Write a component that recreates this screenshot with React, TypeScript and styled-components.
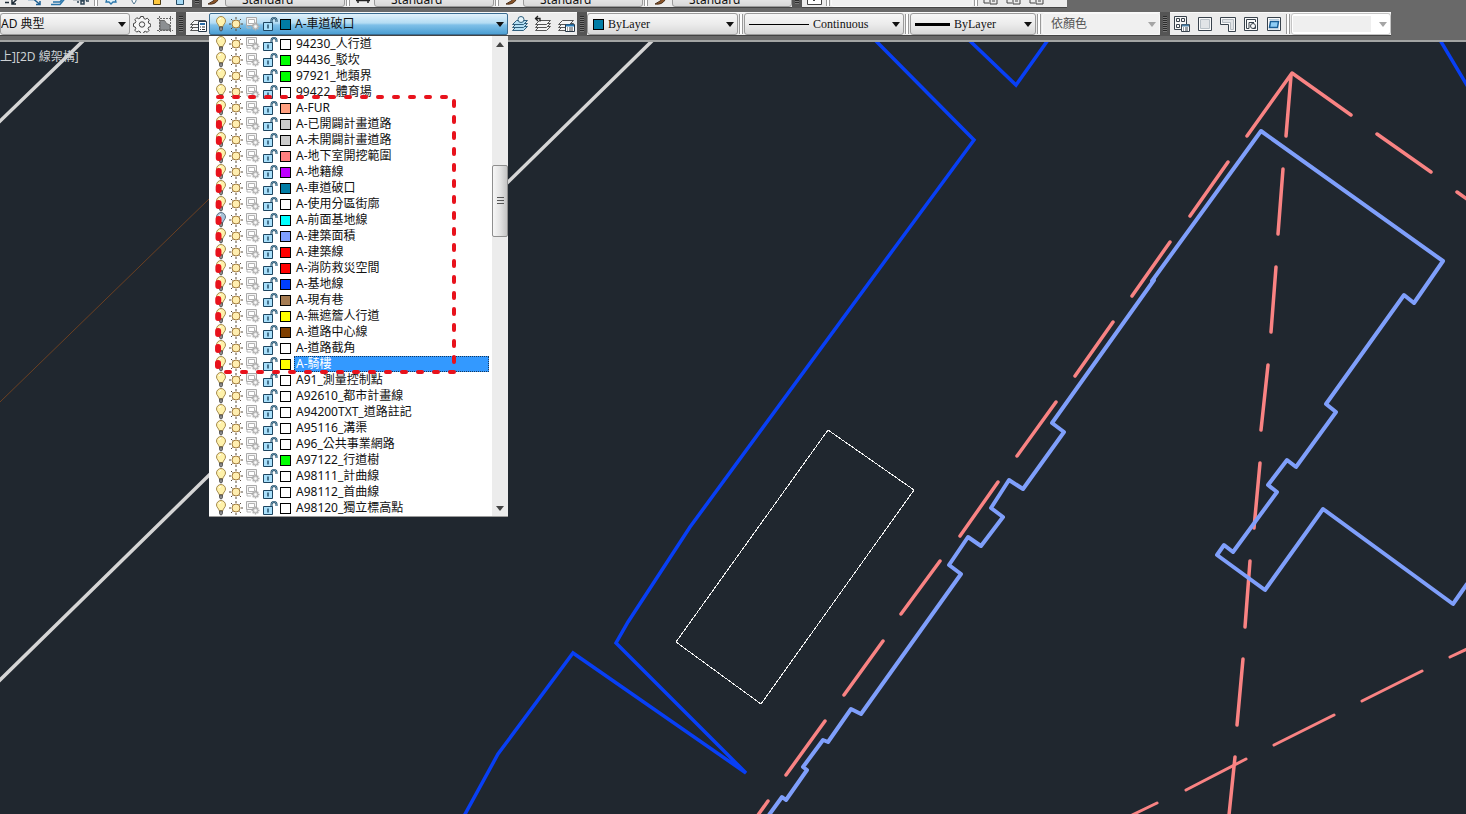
import React from "react";
import styled, { createGlobalStyle } from "styled-components";

const GlobalStyle = createGlobalStyle`
  *, *::before, *::after { box-sizing: border-box; }
  html, body { margin: 0; padding: 0; }
  body {
    background: #20262f;
    color: #111;
    font: 12px/16px "Noto Sans", "Noto Sans CJK TC", sans-serif;
    overflow: hidden;
  }
  svg { display: block; flex: none; }
`;

const SERIF = '"Liberation Serif", "Noto Sans CJK TC", serif';

/* ---------- layout ---------- */

const Window = styled.div`
  display: flex;
  flex-direction: column;
  min-height: 100vh;
`;

const ToolbarArea = styled.header`
  position: relative;
  z-index: 2;
  display: flex;
  flex-direction: column;
  gap: 4px;
  padding-bottom: 4px;
  background: #696969;
  border-bottom: 2px solid #a3a5a4;
`;

const ToolbarRow = styled.div`
  display: flex;
  height: 24px;
`;

const Toolbar = styled.div<{ $width: number; $pad?: number }>`
  flex: none;
  display: flex;
  align-items: center;
  width: ${(p) => p.$width}px;
  height: 24px;
  padding: 0 ${(p) => p.$pad ?? 0}px;
  background: #ececec;
  border-top: 1px solid #fafafa;
  border-bottom: 1px solid #444;
`;

const Grip = styled.div`
  flex: none;
  width: 10px;
  height: 24px;
  border: 3px solid #555;
  border-width: 4px 3px;
  background: repeating-linear-gradient(#2c2c2c 0 1px, #777 1px 2px);
`;

const Divider = styled.span`
  flex: none;
  width: 6px;
  height: 20px;
  border: 1px solid #ececec;
  border-width: 0 1px;
  background: linear-gradient(90deg, #9a9a9a 1px, #fff 1px 3px, #9a9a9a 3px);
`;

const ToolButton = styled.button`
  flex: none;
  display: flex;
  align-items: center;
  justify-content: center;
  width: 23px;
  height: 22px;
  padding: 0;
  border: 0;
  background: transparent;
`;

/* ---------- combo boxes ---------- */

const ComboShell = styled.label<{ $width: number; $pad?: number; $disabled?: boolean }>`
  flex: none;
  display: flex;
  align-items: center;
  gap: 4px;
  width: ${(p) => p.$width}px;
  height: 22px;
  padding: 0 3px 0 ${(p) => p.$pad ?? 4}px;
  border: 1px solid ${(p) => (p.$disabled ? "#f8f8f8" : "#9b9b9b")};
  border-radius: 3px;
  background: ${(p) => (p.$disabled ? "#f0f0f0" : "linear-gradient(#f7f7f7, #ececec 50%, #d8d8d8)")};
`;

const BlankShell = styled(ComboShell)`
  gap: 8px;
  border-color: #c4c4c4;
  background: #fff;
`;

const NativeSelect = styled.select<{ $serif?: boolean }>`
  flex: 1;
  min-width: 0;
  height: 20px;
  padding: 0;
  border: 0;
  appearance: none;
  background: transparent;
  color: #111;
  font: 12px/16px ${(p) => (p.$serif ? SERIF : '"Noto Sans", "Noto Sans CJK TC", sans-serif')};
  &:disabled { color: #555; opacity: 1; }
`;

const BlankSelect = styled(NativeSelect)`
  background: #efefef;
  height: 16px;
`;

/* The upper toolbar is scrolled under the window edge: only its foot shows. */
const ClippedRow = styled.div`
  display: flex;
  align-items: flex-end;
  height: 8px;
  overflow: hidden;

  ${ToolButton} { padding-top: 6px; }
  ${NativeSelect} { padding-top: 6px; }
`;

const Swatch = styled.span<{ $color: string }>`
  flex: none;
  width: 11px;
  height: 11px;
  border: 1px solid #000;
  background: ${(p) => p.$color};
`;

const LineSample = styled.span<{ $width: number; $weight: number }>`
  flex: none;
  width: ${(p) => p.$width}px;
  height: ${(p) => p.$weight}px;
  background: #000;
`;

const Caret = ({ color = "#111", up = false }: { color?: string; up?: boolean }) => (
  <svg width="8" height="5" viewBox="0 0 8 5" aria-hidden="true" pointerEvents="none">
    <path d={up ? "M0 5 4 0 8 5z" : "M0 0h8L4 5z"} fill={color} />
  </svg>
);

const LayerPicker = styled.div`
  position: relative;
  flex: none;
  width: 299px;
  height: 22px;
`;

const LayerButton = styled.button`
  display: flex;
  align-items: center;
  width: 100%;
  height: 22px;
  padding: 0 3px 0 4px;
  border: 1px solid #3b6d92;
  border-radius: 2px;
  background: linear-gradient(#e2f2fb, #b4dcf3 45%, #7fc0e8 55%, #4c9fd3);
  color: #111;
  font: inherit;
  text-align: left;
`;

const LayerMenu = styled.div`
  position: absolute;
  top: 100%;
  left: 0;
  display: flex;
  width: 100%;
  margin-top: 1px;
  background: #fff;
  border-bottom: 1px solid #9a9a9a;
`;

const LayerList = styled.ul`
  flex: 1;
  margin: 0;
  padding: 0 3px 0 5px;
  list-style: none;
`;

const LayerRow = styled.li`
  display: flex;
  align-items: center;
  height: 16px;
`;

const StateIcons = styled.span`
  flex: none;
  display: flex;
  align-items: center;
  width: 66px;
`;

const LayerName = styled.span<{ $selected?: boolean }>`
  flex: 1;
  height: 16px;
  margin-left: 3px;
  padding-left: 1px;
  white-space: nowrap;
  line-height: ${(p) => (p.$selected ? 14 : 16)}px;
  border: 1px ${(p) => (p.$selected ? "dotted #15385c" : "solid transparent")};
  border-width: ${(p) => (p.$selected ? 1 : 0)}px 1px;
  background: ${(p) => (p.$selected ? "#3399ff" : "transparent")};
  color: ${(p) => (p.$selected ? "#fff" : "#111")};
`;

const Current = styled.span`
  flex: 1;
  margin-left: 4px;
`;

const Scrollbar = styled.div`
  flex: none;
  display: flex;
  flex-direction: column;
  width: 16px;
  background: #ececec;
`;

const ScrollArrow = styled.button`
  display: flex;
  align-items: center;
  justify-content: center;
  height: 16px;
  padding: 0;
  border: 0;
  background: transparent;
`;

const Track = styled.span<{ $grow: number }>`
  flex: ${(p) => p.$grow};
`;

const Thumb = styled.span`
  display: flex;
  flex-direction: column;
  align-items: center;
  justify-content: center;
  gap: 1px;
  height: 72px;
  border: 1px solid #8f8f8f;
  border-radius: 2px;
  background: linear-gradient(90deg, #f7f7f7, #e4e4e4 50%, #c4c4c4);
`;

const ThumbLine = styled.span`
  width: 7px;
  height: 2px;
  border-top: 1px solid #555;
`;

const Markup = styled.svg`
  position: absolute;
  top: 0;
  left: 0;
  pointer-events: none;
`;

/* ---------- drawing area ---------- */

const Canvas = styled.main`
  position: relative;
  flex: 1;
  display: flex;
  min-height: 0;
  background: #20272f;
`;

const Drawing = styled.svg`
  flex: 1;
  width: 100%;
  height: calc(100vh - 42px);
`;

const ViewLabel = styled.div`
  position: absolute;
  top: 7px;
  left: 0;
  color: #ccd0d3;
  white-space: nowrap;
`;

/* ---------- icons ---------- */

const Bulb = ({ off = false }: { off?: boolean }) => (
  <svg width="14" height="16" viewBox="0 0 14 16" aria-hidden="true">
    <path d="M5 10.500C5 8.500 2.500 7.500 2.500 5a4.500 4.500 0 0 1 9 0c0 2.500-2.500 3.500-2.500 5.500z" fill={off ? "#a9c3d8" : "#fff2ab"} stroke={off ? "#5b7183" : "#a58a4e"} />
    <path d="M5.500 11v2.500l1 1.500h1l1-1.500V11z" fill="#888" stroke="#444" strokeWidth=".8" />
    <path d="M5 4q.5-1.500 2-1.500" fill="none" stroke="#fff" />
  </svg>
);

const Sun = () => (
  <svg width="16" height="16" viewBox="0 0 16 16" aria-hidden="true">
    <path d="M8 1v2M8 13v2M1 8h2M13 8h2M3 3l1.500 1.500M11.500 11.500 13 13M13 3l-1.500 1.500M4.500 11.500 3 13" stroke="#55483a" />
    <circle cx="8" cy="8" r="4" fill="#ffeeb0" stroke="#a07a3c" />
  </svg>
);

const ViewportFreeze = () => (
  <svg width="18" height="16" viewBox="0 0 18 16" aria-hidden="true">
    <path d="M2.500 1.500h10v8h-10z" fill="#f4f4f4" stroke="#aaa" />
    <path d="M4.500 3.500h6v4h-6z" fill="#fff" stroke="#b4b4b4" />
    <path d="M3 9.500v2.500h4" fill="none" stroke="#b8b8b8" />
    <path d="M11.500 6.500v8M7.500 10.500h8M8.700 7.700l5.600 5.600M14.300 7.700l-5.600 5.600" stroke="#b0b0b0" strokeWidth="1.500" />
    <circle cx="11.500" cy="10.500" r="2.500" fill="#dcdcdc" stroke="#b0b0b0" />
    <circle cx="11.500" cy="10.500" r="1" fill="#fff" />
  </svg>
);

const Unlock = () => (
  <svg width="16" height="16" viewBox="0 0 16 16" aria-hidden="true">
    <path d="M9.500 7V4.500c0-3.500 5-3.500 5 0V6" fill="none" stroke="#1d4560" strokeWidth="2" />
    <path d="M9.500 7V4.500c0-3.500 5-3.500 5 0V6" fill="none" stroke="#a5d8f0" strokeWidth=".6" />
    <path d="M1.500 6.500h9v8h-9z" fill="#a9e0fb" stroke="#1d4560" />
    <path d="M6 8.500v4" stroke="#1d4560" strokeWidth="1.400" />
  </svg>
);

const Gear = () => (
  <svg width="18" height="18" viewBox="0 0 18 18" fill="#f6f6f6" stroke="#444" aria-hidden="true">
    <path d="M7.600 1.500h2.800l.5 2 1.500.7 1.900-1 1.900 2-1 1.800.6 1.400 1.900.6v2.600l-2 .5-.6 1.500 1 1.800-1.900 1.900-1.800-1-1.400.6-.6 1.600H7.600l-.5-1.800-1.600-.6-1.800 1-1.900-1.900 1-1.800-.6-1.400-1.700-.5V8.500l1.800-.6.6-1.400-1-1.800 1.900-2 1.800 1 1.500-.6z" />
    <circle cx="9" cy="9.500" r="2.700" />
  </svg>
);

const Clip = () => (
  <svg width="18" height="18" viewBox="0 0 18 18" aria-hidden="true">
    <path d="M4 15V5.500h4.500q1.500 4 5.500 4.500v5z" fill="#8c8f92" stroke="#666" />
    <path d="M1 3.500h16M3.500 1v16M14.500 1v16M1 15.500h16" stroke="#666" strokeDasharray="2 1" />
  </svg>
);

const Sheets = ({ kind }: { kind: "manager" | "current" | "previous" | "states" }) => {
  const line = kind === "current" ? "#31607d" : "#555";
  return (
    <svg width="18" height="18" viewBox="0 0 18 18" aria-hidden="true">
      <g fill={kind === "current" ? "#b5dff4" : "#f4f4f4"} stroke={line}>
        <path d="M5.500 11.500h11l-4 4h-11z" />
        <path d="M5.500 8.500h11l-4 4h-11z" />
        <path d="M5.500 5.500h11l-4 4h-11z" />
      </g>
      {kind === "manager" && (
        <>
          <path d="M9.500 6.500h8v10h-8z" fill="#fff" stroke="#263646" />
          <path d="M11 9h5" stroke="#2b6ca5" strokeWidth="2" />
          <path d="M11 12h1m1 0h3m-5 2.500h1m1 0h3" stroke="#333" />
        </>
      )}
      {kind === "current" && <circle cx="10" cy="4.500" r="3" fill="#e4f4fb" stroke={line} />}
      {kind === "previous" && <path d="M1 3.500h5v3M4 1 1.500 3.500 4 6" fill="none" stroke="#222" strokeWidth="1.300" />}
      {kind === "states" && (
        <>
          <path d="M8.500 9.500h9v7h-9z" fill="#fff" stroke="#263646" />
          <path d="M9 10.500h8" stroke="#2b7db8" strokeWidth="2" />
          <path d="M10 13h1m1 0h4m-6 2h1m1 0h4" stroke="#444" />
        </>
      )}
    </svg>
  );
};

const Viewports = ({ kind }: { kind: "named" | "single" | "poly" | "object" | "clip" }) => (
  <svg width="16" height="16" viewBox="0 0 16 16" fill="none" stroke="#38424c" aria-hidden="true">
    {kind === "named" && (
      <>
        <path d="M.5.5h12v13H.5z" fill="#f7f7f7" />
        <path d="M2.500 2.500h3v3h-3zM7.500 2.500h3v3h-3zM2.500 8.500h3v3h-3z" />
        <path d="M7.500 8.500h8v7h-8z" fill="#fff" />
        <path d="M8 9.500h7" stroke="#4a7fa5" strokeWidth="2" />
        <path d="M9 12h1m1 0h3m-5 2h1m1 0h3" />
      </>
    )}
    {kind === "single" && (
      <>
        <path d="M1.500 1.500h13v13h-13z" fill="#fafafa" />
        <path d="M3.500 3.500h9v9h-9z" fill="#e1e4e7" stroke="#b8c0c7" />
      </>
    )}
    {kind === "poly" && (
      <>
        <path d="M.5 1.500h15v14h-7v-7h-8z" fill="#fafafa" />
        <path d="M2.500 3.500h11v10h-3v-7h-8z" fill="#e1e4e7" stroke="#b5bcc2" />
      </>
    )}
    {kind === "object" && (
      <>
        <path d="M1.500 1.500h13v13h-13z" fill="#fafafa" />
        <path d="M12.500 6V3.500h-9v9H6V6.500h5" />
        <circle cx="10" cy="10" r="2.500" />
        <path d="M10 12.500h2.500V10" />
      </>
    )}
    {kind === "clip" && (
      <>
        <path d="M1.500 1.500h13v13h-13z" fill="#fafafa" />
        <path d="M4.500 5.500h8l-1 6h-8z" fill="#8fcdf5" stroke="#1c5f96" strokeWidth="1.500" />
        <path d="M3 3.500h10M3 13h10" stroke="#b5cbdc" />
      </>
    )}
  </svg>
);

const TopIcon = ({ kind }: { kind: number }) => (
  <svg width="18" height="16" viewBox="0 0 18 16" fill="none" aria-hidden="true">
    {kind === 0 && <path d="M1 11.500h4M8 13l6-6M8 9v4h4" stroke="#1d2b36" strokeWidth="1.500" />}
    {kind === 1 && <path d="M1 8.500h6l6 5M13 10v3.500H9" stroke="#1d5f92" strokeWidth="1.500" />}
    {kind === 2 && <path d="M1 13.500h9l5-6M3 11h7l4-5" stroke="#2a76ab" strokeWidth="1.500" />}
    {kind === 3 && <path d="M0 8.500h14M8 10h3v3H8zM13 10h3M4 11h2" stroke="#2f4657" strokeWidth="1.500" />}
    {kind === 4 && <path d="M5 7 4 11h3l2 2 2-2h3l-1-4" stroke="#2a76ab" strokeWidth="1.300" fill="#dff1fa" />}
    {kind === 5 && <path d="M7 6v4l2 3 2-3V6" stroke="#4b728c" fill="#fff" />}
    {kind === 6 && <path d="M5.500 6.500h7v7h-7z" stroke="#4c3b12" fill="#ffc83d" />}
    {kind === 7 && <path d="M5.500 6.500h7v7h-7z" stroke="#264a62" fill="#a6daf5" />}
    {kind === 8 && <path d="M3 13q7 1 10-4l2-4-4 1q-1 4-8 7z" fill="#8a5326" stroke="#4d321d" />}
    {kind === 9 && <path d="M2 9.500h14M4 6v6M14 6v6" stroke="#222" strokeWidth="1.500" />}
    {kind === 10 && <path d="M2 7v5h5m1-5h7v6H8zm2 3h3" stroke="#444" />}
    {kind === 11 && <path d="M2.500 1.500h14v12h-14zM7 8l2 2 3-3" stroke="#444" fill="#fff" />}
  </svg>
);

/* ---------- data ---------- */

type Layer = { name: string; color?: string; off?: boolean; selected?: boolean };

const LAYERS: Layer[] = [
  { name: "94230_人行道" },
  { name: "94436_駁坎", color: "#00ff00" },
  { name: "97921_地類界", color: "#00ff00" },
  { name: "99422_體育場" },
  { name: "A-FUR", color: "#ff9f7f" },
  { name: "A-已開闢計畫道路", color: "#cccccc" },
  { name: "A-未開闢計畫道路", color: "#cccccc" },
  { name: "A-地下室開挖範圍", color: "#ff7f7f" },
  { name: "A-地籍線", color: "#bf00ff" },
  { name: "A-車道破口", color: "#007ca5" },
  { name: "A-使用分區街廓" },
  { name: "A-前面基地線", color: "#00ffff", off: true },
  { name: "A-建築面積", color: "#7f9fff" },
  { name: "A-建築線", color: "#ff0000" },
  { name: "A-消防救災空間", color: "#ff0000" },
  { name: "A-基地線", color: "#003fff" },
  { name: "A-現有巷", color: "#a57c52" },
  { name: "A-無遮簷人行道", color: "#ffff00" },
  { name: "A-道路中心線", color: "#7f3f00" },
  { name: "A-道路截角" },
  { name: "A-騎樓", color: "#ffff00", selected: true },
  { name: "A91_測量控制點" },
  { name: "A92610_都市計畫線" },
  { name: "A94200TXT_道路註記" },
  { name: "A95116_溝渠" },
  { name: "A96_公共事業網路" },
  { name: "A97122_行道樹", color: "#00ff00" },
  { name: "A98111_計曲線" },
  { name: "A98112_首曲線" },
  { name: "A98120_獨立標高點" },
];

const WIDE_DASHES =
  "M1292 73 1247 136M1228 162 1190 216M1170 242 1132 296M1113 322 1075 376M1056 402 1017 456M998 482 960 536M940 561 901 614M883 641 844 695M825 721 786 775M768 801 758 815" +
  "M1292 73 1351 115M1377 134 1431 172M1457 192 1467 199" +
  "M1291 76 1286 136M1283 169 1278 234M1276 267 1271 332M1268 365 1261 430M1260 463 1254 528M1250 561 1245 627M1243 659 1237 725M1235 757 1229 815";

const NARROW_DASHES =
  "M1132 815 1157 803M1186 790 1246 759M1274 745 1334 715M1362 701 1422 671M1450 657 1467 649";

const BUILDING =
  "M769 815 782 797 786 800 807 770 803 767 823 740 828 742 851 709 861 714 961 574 949 565 968 537 981 546 1003 517 991 508 1009 480 1023 489 1064 432 1052 423 1154 280 1152 281 1261 131 1443 261 1414 303 1404 295 1326 404 1336 412 1296 467 1287 460 1268 485 1277 492 1233 552 1224 545 1217 555 1265 590 1323 509 1453 604 1467 584";

/* ---------- parts ---------- */

const LayerState = ({ off }: { off?: boolean }) => (
  <StateIcons>
    <Bulb off={off} />
    <Sun />
    <ViewportFreeze />
    <Unlock />
  </StateIcons>
);

const StyleCombo = ({ label, width }: { label: string; width: number }) => (
  <ComboShell $width={width} $pad={16}>
    <NativeSelect aria-label={label}>
      <option>Standard</option>
    </NativeSelect>
    <Caret />
  </ComboShell>
);

const TopTool = ({ kind, label }: { kind: number; label: string }) => (
  <ToolButton aria-label={label}>
    <TopIcon kind={kind} />
  </ToolButton>
);

const INQUIRY_TOOLS = ["Distance", "Leader", "Layer walk", "Isolate"];
const LAYER_TOOLS = ["Freeze", "Off", "Lock", "Unlock"];

function StyleToolbars() {
  return (
    <ClippedRow>
      <Toolbar $width={192} $pad={1}>
        {INQUIRY_TOOLS.map((label, i) => (
          <TopTool key={label} kind={i} label={label} />
        ))}
        <Divider />
        {LAYER_TOOLS.map((label, i) => (
          <TopTool key={label} kind={i + 4} label={label} />
        ))}
      </Toolbar>
      <Grip />
      <Toolbar $width={590}>
        <TopTool kind={8} label="Text style" />
        <StyleCombo label="Text style" width={120} />
        <Divider />
        <TopTool kind={9} label="Dimension style" />
        <StyleCombo label="Dimension style" width={120} />
        <Divider />
        <TopTool kind={8} label="Table style" />
        <StyleCombo label="Table style" width={120} />
        <Divider />
        <TopTool kind={8} label="Multileader style" />
        <StyleCombo label="Multileader style" width={120} />
      </Toolbar>
      <Grip />
      <Toolbar $width={265}>
        <TopTool kind={11} label="Reference" />
        <Divider />
        <ComboShell $width={142} $disabled>
          <NativeSelect aria-label="Reference name" disabled />
        </ComboShell>
        <Divider />
        <TopTool kind={10} label="Edit reference" />
        <TopTool kind={10} label="Add to set" />
        <TopTool kind={10} label="Remove from set" />
      </Toolbar>
    </ClippedRow>
  );
}

function LayerDropDown() {
  return (
    <LayerPicker>
      <LayerButton aria-haspopup="listbox" aria-expanded="true">
        <LayerState />
        <Swatch $color="#007ca5" />
        <Current>A-車道破口</Current>
        <Caret />
      </LayerButton>
      <LayerMenu>
        <LayerList role="listbox" aria-label="Layers">
          {LAYERS.map((layer) => (
            <LayerRow key={layer.name} role="option" aria-selected={!!layer.selected}>
              <LayerState off={layer.off} />
              <Swatch $color={layer.color ?? "#fff"} />
              <LayerName $selected={layer.selected}>{layer.name}</LayerName>
            </LayerRow>
          ))}
        </LayerList>
        <Scrollbar>
          <ScrollArrow aria-label="Scroll up">
            <Caret up color="#444" />
          </ScrollArrow>
          <Track $grow={3} />
          <Thumb>
            <ThumbLine />
            <ThumbLine />
            <ThumbLine />
          </Thumb>
          <Track $grow={7} />
          <ScrollArrow aria-label="Scroll down">
            <Caret color="#444" />
          </ScrollArrow>
        </Scrollbar>
        <Markup width="260" height="350" viewBox="0 0 260 350" fill="none" stroke="#e8121c" strokeWidth="4" strokeLinecap="round" aria-hidden="true">
          <path d="M9 61H240" strokeDasharray="4 12" />
          <path d="M245 65V326" strokeDasharray="5 11" />
          <path d="M17 336H246" strokeDasharray="4 12" />
          <path d="M10 71 9 330" strokeDasharray="3 13" strokeWidth="6" />
        </Markup>
      </LayerMenu>
    </LayerPicker>
  );
}

function PropertyToolbars() {
  return (
    <ToolbarRow>
      <Toolbar $width={176}>
        <ComboShell $width={130} $pad={0}>
          <NativeSelect aria-label="Workspace">
            <option>AD 典型</option>
          </NativeSelect>
          <Caret />
        </ComboShell>
        <ToolButton aria-label="Workspace settings"><Gear /></ToolButton>
        <ToolButton aria-label="My workspace"><Clip /></ToolButton>
      </Toolbar>
      <Grip />
      <Toolbar $width={391}>
        <ToolButton aria-label="Layer properties"><Sheets kind="manager" /></ToolButton>
        <LayerDropDown />
        <ToolButton aria-label="Make object's layer current"><Sheets kind="current" /></ToolButton>
        <ToolButton aria-label="Layer previous"><Sheets kind="previous" /></ToolButton>
        <ToolButton aria-label="Layer states"><Sheets kind="states" /></ToolButton>
      </Toolbar>
      <Grip />
      <Toolbar $width={573}>
        <ComboShell $width={151} $pad={5}>
          <Swatch $color="#007ca5" />
          <NativeSelect $serif aria-label="Color">
            <option>ByLayer</option>
          </NativeSelect>
          <Caret />
        </ComboShell>
        <Divider />
        <ComboShell $width={160}>
          <LineSample $width={60} $weight={1} />
          <NativeSelect $serif aria-label="Linetype">
            <option>Continuous</option>
          </NativeSelect>
          <Caret />
        </ComboShell>
        <Divider />
        <ComboShell $width={126}>
          <LineSample $width={35} $weight={3} />
          <NativeSelect $serif aria-label="Lineweight">
            <option>ByLayer</option>
          </NativeSelect>
          <Caret />
        </ComboShell>
        <Divider />
        <ComboShell $width={118} $pad={8} $disabled>
          <NativeSelect aria-label="Plot style" disabled>
            <option>依顏色</option>
          </NativeSelect>
          <Caret color="#a5a5a5" />
        </ComboShell>
      </Toolbar>
      <Grip />
      <Toolbar $width={221}>
        <ToolButton aria-label="Viewports dialog"><Viewports kind="named" /></ToolButton>
        <ToolButton aria-label="Single viewport"><Viewports kind="single" /></ToolButton>
        <ToolButton aria-label="Polygonal viewport"><Viewports kind="poly" /></ToolButton>
        <ToolButton aria-label="Object to viewport"><Viewports kind="object" /></ToolButton>
        <ToolButton aria-label="Clip viewport"><Viewports kind="clip" /></ToolButton>
        <Divider />
        <BlankShell $width={100} $pad={1} $disabled>
          <BlankSelect aria-label="Viewport scale" disabled />
          <Caret color="#a5a5a5" />
        </BlankShell>
      </Toolbar>
    </ToolbarRow>
  );
}

export default function App() {
  return (
    <Window>
      <GlobalStyle />
      <ToolbarArea>
        <StyleToolbars />
        <PropertyToolbars />
      </ToolbarArea>
      <Canvas>
        <ViewLabel>上][2D 線架構]</ViewLabel>
        <Drawing viewBox="0 42 1466 772" preserveAspectRatio="xMidYMid slice" fill="none" role="img" aria-label="Site plan">
          <path d="M0 402 210 198" stroke="#6b4022" />
          <path d="M-2 123 84 40M-2 682 653 40" stroke="#d5d5d5" strokeWidth="3.500" />
          <path d="M875 40 974 140 893 250 690 527 628 622 616 643 746 773 573 653 498 754 464 816M969 40 1016 85 1048 40M1440 40 1468 87" stroke="#083ff5" strokeWidth="3.500" />
          <path d="M828 430 914 490 761 704 676 642z" stroke="#f2f2f2" shapeRendering="crispEdges" />
          <g strokeLinecap="round" strokeLinejoin="round">
            <path d={WIDE_DASHES} stroke="#f98383" strokeWidth="3.500" />
            <path d={NARROW_DASHES} stroke="#f98383" strokeWidth="3" />
            <path d={BUILDING} stroke="#7f9ffb" strokeWidth="4" />
          </g>
        </Drawing>
      </Canvas>
    </Window>
  );
}
